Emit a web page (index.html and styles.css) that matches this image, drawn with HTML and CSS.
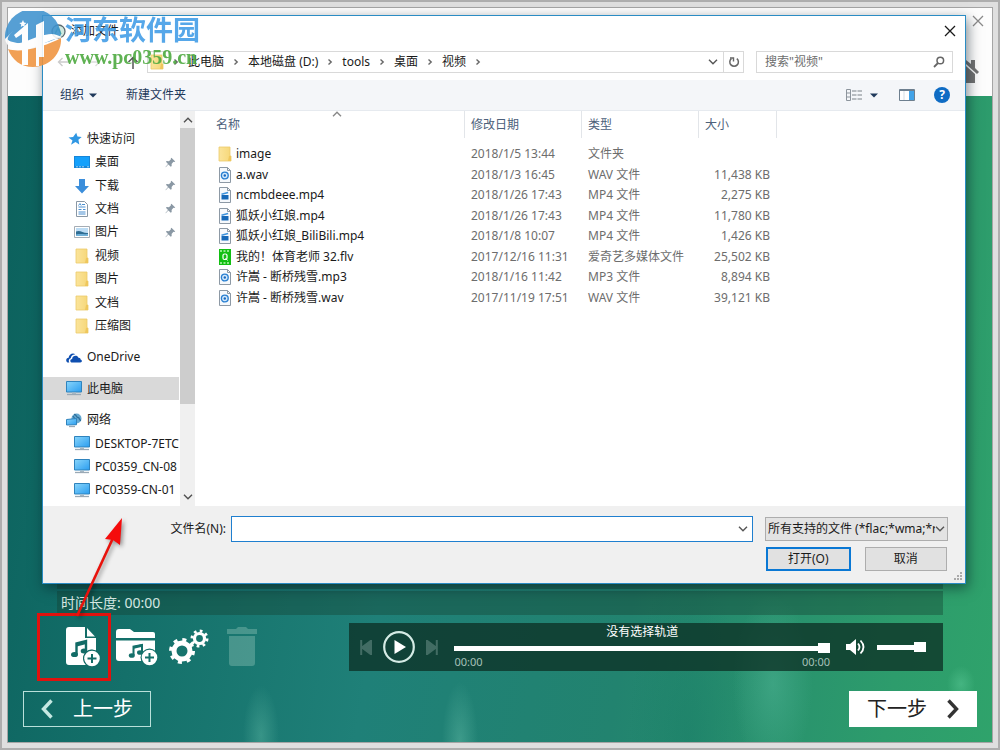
FILE: index.html
```html
<!DOCTYPE html>
<html lang="zh-CN">
<head>
<meta charset="utf-8">
<title>添加文件</title>
<link rel="stylesheet" href="styles.css">
</head>
<body>
<svg class="sprite" aria-hidden="true">
  <defs>
    <linearGradient id="screen" x1="0" y1="0" x2="1" y2="1"><stop offset="0" stop-color="#8ad6fb"/><stop offset="1" stop-color="#2a9df0"/></linearGradient>
    <linearGradient id="paper" x1="0" y1="0" x2="1" y2="0"><stop offset="0" stop-color="#fbe49b"/><stop offset="1" stop-color="#f6d778"/></linearGradient>
  </defs>
  <symbol id="i-chev" viewBox="0 0 6 8"><path d="M1.5 1.5 4.2 4 1.5 6.5" fill="none" stroke="#666" stroke-width="1.4"/></symbol>
  <symbol id="i-down" viewBox="0 0 10 6"><path d="M1 .8 5 4.8 9 .8" fill="none" stroke="currentColor" stroke-width="1.4"/></symbol>
  <symbol id="i-caret" viewBox="0 0 8 5"><path d="M0 .5h8L4 4.5z" fill="#1e395b"/></symbol>
  <symbol id="i-folder" viewBox="0 0 14 16"><path d="M1 1h11v9h1v5H1z" fill="url(#paper)" stroke="#ecca6a" stroke-width=".8"/><path d="M11 10h2v5h-3z" fill="#efc75c"/></symbol>
  <symbol id="i-star" viewBox="0 0 14 14"><path d="m8.200.800 1.300 3.800 4.200.5-3.300 2.700.9 4.600-3.800-2.300-4.500 2.600 1.500-4.300L.5 5.400l4.600-.5z" fill="#2f97e3"/></symbol>
  <symbol id="i-desk" viewBox="0 0 16 12"><path d="M0 0h16v12H0z" fill="#1686d9"/><path d="M1 1h14v9H1z" fill="#14a0fb"/><path d="M2 10.800h9M13 10.800h2" stroke="#bfe3fb" stroke-width=".8" stroke-dasharray="2 1"/></symbol>
  <symbol id="i-dl" viewBox="0 0 16 16"><path d="M5 1h6v7h4l-7 7.500L1 8h4z" fill="#3b8edb"/></symbol>
  <symbol id="i-doc" viewBox="0 0 12 16"><path d="M.5.5h8l3 3v12H.5z" fill="#fff" stroke="#8a98a5"/><path d="M2.500 6h7M2.500 8.500h3M7 8.500h2.500M2.500 11h7M2.500 13h7M6 3.500h3" stroke="#4a8fd0" stroke-width="1"/><path d="M2.500 4.500 4 2.500l1.200 2" fill="none" stroke="#4a8fd0"/></symbol>
  <symbol id="i-pic" viewBox="0 0 16 12"><path d="M.5.5h15v11H.5z" fill="#fff" stroke="#a5adb5"/><path d="M2 2h12v8H2z" fill="#bcdcf4"/><path d="M2 5.500c4-2 7 2 12 1.500v3H2z" fill="#2f6d93"/><path d="M2 8.500c4-1 8 0 12-.5v2H2z" fill="#6fb0d8"/></symbol>
  <symbol id="i-pin" viewBox="0 0 12 12"><path d="m7 .8 4.200 4-1.200.7-.8-.2-2 2.200.1 2.300-1 .8L3.700 8.200.8 11.300l-.3-.3L3.300 7.700 1 5.200l.9-.8 2.400.1 2.200-2-.2-.9z" fill="#8a98a4"/></symbol>
  <symbol id="i-cloud" viewBox="0 0 16 11"><path d="M1.500 10.500C-.8 9 .2 5.800 2.600 5.800 3 2.500 6.400.3 9.300 2.200c-3 .2-4.300 2-4.500 4-2 .5-2.500 2.500-1.500 4.300z" fill="#0f4fb0"/><path d="M5.500 10.500c-2-1-1.300-3.600.6-3.600.3-3.400 5-4.400 6.300-1.200 2-.2 2.300 1.600 2.100 1.800 2 .5 1.800 3-.2 3z" fill="#0f4fb0"/></symbol>
  <symbol id="i-pc" viewBox="0 0 16 15"><path d="M.5.500h15v10.500H.5z" fill="url(#screen)" stroke="#2f83bd"/><path d="M6 11.500h4v1.500H6z" fill="#a9bac6"/><path d="M1 13.500h14" stroke="#9aa9b5" stroke-width="1.300"/></symbol>
  <symbol id="i-net" viewBox="0 0 16 15"><circle cx="10.500" cy="5.500" r="5" fill="#66a8d0"/><path d="M8 1.500c3 0 2 3 4 3s1 3 3 3M7 3l2 3" stroke="#2d6f9c" fill="none" stroke-width="1.300"/><path d="m.5 6.500 10-1v6.200l-10 .3z" fill="url(#screen)" stroke="#2f83bd"/><path d="M3 13.500h6" stroke="#9aa9b5" stroke-width="1.300"/></symbol>
  <symbol id="i-audio" viewBox="0 0 12 16"><path d="M.5.500h8l3 3v12H.5z" fill="#f6f9fc" stroke="#8d99a5"/><path d="M8.500.500v3h3" fill="none" stroke="#8d99a5"/><circle cx="5.800" cy="8.500" r="3.400" fill="#d3e8fa" stroke="#2a80d2" stroke-width="1.400"/><circle cx="5.800" cy="8.500" r="1.200" fill="#1668c0"/></symbol>
  <symbol id="i-video" viewBox="0 0 12 16"><path d="M.5.500h8l3 3v12H.5z" fill="#f6f9fc" stroke="#8d99a5"/><path d="M8.500.500v3h3" fill="none" stroke="#8d99a5"/><path d="M2.500 8h7v4.500h-7z" fill="#1568b8"/><path d="m2.500 7.200 6.600-1.700" stroke="#3c92dc" stroke-width="1.600"/></symbol>
  <symbol id="i-flv" viewBox="0 0 12 16"><path d="M0 0h12v16H0z" fill="#12bf12"/><path d="M1 2h10M1 14h10" stroke="#b6f7b0" stroke-width="1.500" stroke-dasharray="2 1.500"/><rect x="4" y="5" width="4" height="5.500" rx="1.500" fill="none" stroke="#fff" stroke-width="1.200"/><path d="m6.500 9 2 2.500" stroke="#fff"/></symbol>
  <symbol id="i-x" viewBox="0 0 12 12"><path d="m1 1 10 10M11 1 1 11" stroke="currentColor" stroke-width="1.300"/></symbol>
</svg>

<div class="frame">
  <main class="app">
    <header class="app-head">
      <button class="bare app-close" aria-label="关闭程序"><svg width="12" height="12"><use href="#i-x"/></svg></button>
      <button class="bare app-home" aria-label="主页"><svg width="26" height="24" viewBox="0 0 26 24"><path d="M13 1 0 13l2 2L13 5l11 10 2-2-4-4V1h-4v4z" fill="#747474"/><path d="M4 15 13 7l9 8v9H4z" fill="#747474"/></svg></button>
    </header>
    <section class="stage">
      <div class="tracks"></div>
      <div class="length">时间长度: 00:00</div>
      <div class="controls">
        <div class="tools">
          <button class="bare" aria-label="添加文件"><svg width="34" height="40" viewBox="0 0 34 40"><path d="M3 0h16v11h11v13a8 8 0 0 0-9 14H3a3 3 0 0 1-3-3V3a3 3 0 0 1 3-3z" fill="#fff"/><path d="m21 1 8 8.500h-8z" fill="#fff"/><path d="M10.500 27V16.500L20 14v9" fill="none" stroke="#126b66" stroke-width="2.400"/><path d="M10.500 18 20 15.500" stroke="#126b66" stroke-width="3"/><ellipse cx="8.500" cy="27.500" rx="3.500" ry="2.600" fill="#126b66"/><ellipse cx="18" cy="24" rx="3.300" ry="2.500" fill="#126b66"/><circle cx="26" cy="31.500" r="9" fill="#126b66"/><circle cx="26" cy="31.500" r="7.800" fill="#fff"/><path d="M26 27v9M21.500 31.500h9" stroke="#126b66" stroke-width="2"/></svg></button>
          <button class="bare" aria-label="添加文件夹"><svg width="42" height="38" viewBox="0 0 42 38"><path d="M0 10V4a3 3 0 0 1 3-3h11l4 3h19a2 2 0 0 1 2 2v4z" fill="#fff"/><path d="M0 12.500h39V33H3a3 3 0 0 1-3-3z" fill="#fff"/><path d="M17.500 27v-8.500L26 17v7" fill="none" stroke="#14706a" stroke-width="2"/><path d="m17.500 19.500 8.500-2" stroke="#14706a" stroke-width="2.500"/><ellipse cx="15.800" cy="27.500" rx="3" ry="2.300" fill="#14706a"/><ellipse cx="24" cy="24.500" rx="3" ry="2.300" fill="#14706a"/><circle cx="33.500" cy="29.500" r="9" fill="#14706a"/><circle cx="33.500" cy="29.500" r="7.800" fill="#fff"/><path d="M33.500 25v9M29 29.500h9" stroke="#14706a" stroke-width="2"/></svg></button>
          <button class="bare" aria-label="设置"><svg width="40" height="36" viewBox="0 0 40 36"><circle cx="13" cy="22" r="8" fill="none" stroke="#fff" stroke-width="5"/><circle cx="13" cy="22" r="11.400" fill="none" stroke="#fff" stroke-width="3.200" stroke-dasharray="4 4.950"/><circle cx="30.500" cy="9.500" r="5" fill="none" stroke="#fff" stroke-width="3.200"/><circle cx="30.500" cy="9.500" r="7.600" fill="none" stroke="#fff" stroke-width="2.800" stroke-dasharray="2.700 3.270"/></svg></button>
          <button class="bare dim" aria-label="删除"><svg width="32" height="40" viewBox="0 0 32 40"><path d="M1 2h9l2-2h8l2 2h9v5H1zM3 9h26v27a3 3 0 0 1-3 3H6a3 3 0 0 1-3-3z" fill="#8fc4b8"/></svg></button>
        </div>
        <div class="player">
          <button class="bare faded" aria-label="上一首"><svg width="12" height="15" viewBox="0 0 12 15"><path d="M1.200 0v15M12 0v15L2 7.500z" stroke="#b5cfc9" stroke-width="2" fill="#b5cfc9"/></svg></button>
          <button class="bare" aria-label="播放"><svg width="32" height="32" viewBox="0 0 32 32"><circle cx="16" cy="16" r="14.800" fill="none" stroke="#d5ebe5" stroke-width="2.200"/><path d="m11.500 9 11.500 7-11.500 7z" fill="#fff"/></svg></button>
          <button class="bare faded" aria-label="下一首"><svg width="12" height="15" viewBox="0 0 12 15"><path d="M10.800 0v15M0 0v15l10-7.500z" stroke="#b5cfc9" stroke-width="2" fill="#b5cfc9"/></svg></button>
          <div class="progress">
            <label for="seek">没有选择轨道</label>
            <input class="slider" id="seek" type="range" value="100">
            <div class="times"><span>00:00</span><span>00:00</span></div>
          </div>
          <svg class="speaker" width="20" height="16" viewBox="0 0 20 16"><path d="M0 5h4l6-5v16l-6-5H0z" fill="#fff"/><path d="M12 4.500q3 3.500 0 7M14.500 1.500q6 6.500 0 13" fill="none" stroke="#fff" stroke-width="1.800"/></svg>
          <input class="slider volume" type="range" value="100" aria-label="音量">
        </div>
      </div>
      <nav class="steps">
        <button class="step"><svg width="12" height="20" viewBox="0 0 12 20"><path d="m10.500 1.500-8 8.500 8 8.500" fill="none" stroke="#c5e8e2" stroke-width="3.400"/></svg>上一步</button>
        <button class="step next">下一步<svg width="12" height="20" viewBox="0 0 12 20"><path d="m1.500 1.500 8 8.500-8 8.500" fill="none" stroke="#333" stroke-width="3.400"/></svg></button>
      </nav>
    </section>
  </main>
</div>

<section class="dialog" role="dialog" aria-label="添加文件">
  <header class="title">
    <svg width="15" height="15" viewBox="0 0 15 15"><circle cx="7.500" cy="7.500" r="6.500" fill="#cfe8df" stroke="#5c6a70" stroke-width="1.300"/><path d="m4 10 3-6 3 6" fill="none" stroke="#52b788" stroke-width="1.500"/></svg>
    <h1>添加文件</h1>
    <button class="bare" aria-label="关闭"><svg width="12" height="12"><use href="#i-x"/></svg></button>
  </header>
  <div class="nav">
    <div class="arrows">
      <svg width="12" height="10" viewBox="0 0 12 10"><path d="M12 5H2M5.500 1l-4 4 4 4" fill="none" stroke="#ccc" stroke-width="1.400"/></svg>
      <svg width="12" height="10" viewBox="0 0 12 10"><path d="M0 5h10M6.500 1l4 4-4 4" fill="none" stroke="#ddd" stroke-width="1.400"/></svg>
      <svg class="up" width="12" height="13" viewBox="0 0 12 13"><path d="M6 13V2M1.500 6 6 1.500 10.500 6" fill="none" stroke="#555" stroke-width="1.500"/></svg>
    </div>
    <div class="address">
      <svg width="14" height="16"><use href="#i-folder"/></svg>
      <svg width="6" height="8"><use href="#i-chev"/></svg><span>此电脑</span>
      <svg width="6" height="8"><use href="#i-chev"/></svg><span>本地磁盘 (D:)</span>
      <svg width="6" height="8"><use href="#i-chev"/></svg><span>tools</span>
      <svg width="6" height="8"><use href="#i-chev"/></svg><span>桌面</span>
      <svg width="6" height="8"><use href="#i-chev"/></svg><span>视频</span>
      <svg width="6" height="8"><use href="#i-chev"/></svg>
      <svg class="drop" width="10" height="6"><use href="#i-down"/></svg>
      <button class="bare refresh" aria-label="刷新"><svg width="12" height="12" viewBox="0 0 12 12"><path d="M8.800 2.600A4.300 4.300 0 1 1 3.400 2.600" fill="none" stroke="#666" stroke-width="1.500"/><path d="M2 2h3.500v3.500" fill="none" stroke="#666" stroke-width="1.400"/></svg></button>
    </div>
    <div class="search">
      <input type="text" placeholder="搜索&quot;视频&quot;" aria-label="搜索">
      <svg width="12" height="12" viewBox="0 0 12 12"><circle cx="7.300" cy="4.500" r="3.300" fill="none" stroke="#666" stroke-width="1.500"/><path d="M5 7 1 11" stroke="#666" stroke-width="1.800"/></svg>
    </div>
  </div>
  <div class="bar">
    <button class="bare">组织<svg width="8" height="5"><use href="#i-caret"/></svg></button>
    <button class="bare">新建文件夹</button>
    <button class="bare view" aria-label="视图"><svg width="16" height="12" viewBox="0 0 16 12"><path d="M.5.500h4v11h-4zM.5 4h4M.5 8h4" fill="none" stroke="#8d959d"/><path d="M6 2h10M6 6h10M6 10h10" stroke="#7b8288" stroke-dasharray="4.500 1"/></svg><svg width="8" height="5"><use href="#i-caret"/></svg></button>
    <button class="bare" aria-label="预览窗格"><svg width="16" height="12" viewBox="0 0 16 12"><path d="M.5.500h15v11H.5z" fill="#fff" stroke="#6d7f8f"/><path d="M10 1h5v10h-5z" fill="#42a3e8"/><path d="M5 1v10" stroke="#d5dde4"/><path d="M1 1.500h14" stroke="#6d7f8f"/></svg></button>
    <button class="help" aria-label="帮助">?</button>
  </div>
  <div class="browse">
    <ul class="tree">
      <li><svg width="14" height="14"><use href="#i-star"/></svg>快速访问</li>
      <li class="sub"><svg width="16" height="12"><use href="#i-desk"/></svg>桌面<svg class="pin" width="11" height="11"><use href="#i-pin"/></svg></li>
      <li class="sub"><svg width="16" height="16"><use href="#i-dl"/></svg>下载<svg class="pin" width="11" height="11"><use href="#i-pin"/></svg></li>
      <li class="sub"><svg width="16" height="16"><use href="#i-doc"/></svg>文档<svg class="pin" width="11" height="11"><use href="#i-pin"/></svg></li>
      <li class="sub"><svg width="16" height="12"><use href="#i-pic"/></svg>图片<svg class="pin" width="11" height="11"><use href="#i-pin"/></svg></li>
      <li class="sub"><svg width="16" height="16"><use href="#i-folder"/></svg>视频</li>
      <li class="sub"><svg width="16" height="16"><use href="#i-folder"/></svg>图片</li>
      <li class="sub"><svg width="16" height="16"><use href="#i-folder"/></svg>文档</li>
      <li class="sub"><svg width="16" height="16"><use href="#i-folder"/></svg>压缩图</li>
      <li class="group"><svg width="16" height="11"><use href="#i-cloud"/></svg>OneDrive</li>
      <li class="group current"><svg width="16" height="15"><use href="#i-pc"/></svg>此电脑</li>
      <li class="group"><svg width="16" height="15"><use href="#i-net"/></svg>网络</li>
      <li class="sub"><svg width="16" height="15"><use href="#i-pc"/></svg>DESKTOP-7ETC</li>
      <li class="sub"><svg width="16" height="15"><use href="#i-pc"/></svg>PC0359_CN-08</li>
      <li class="sub"><svg width="16" height="15"><use href="#i-pc"/></svg>PC0359-CN-01</li>
    </ul>
    <div class="scroll">
      <svg class="flip" width="10" height="6"><use href="#i-down"/></svg>
      <div class="thumb"></div>
      <svg width="10" height="6"><use href="#i-down"/></svg>
    </div>
    <div class="list">
      <table>
        <colgroup><col class="c-name"><col class="c-date"><col class="c-type"><col class="c-size"><col></colgroup>
        <thead>
          <tr><th><div>名称<svg class="sort flip" width="10" height="6"><use href="#i-down"/></svg></div></th><th><div>修改日期</div></th><th><div>类型</div></th><th><div>大小</div></th><th></th></tr>
        </thead>
        <tbody>
          <tr><td><svg width="14" height="16"><use href="#i-folder"/></svg>image</td><td>2018/1/5 13:44</td><td>文件夹</td><td></td><td></td></tr>
          <tr><td><svg width="14" height="16"><use href="#i-audio"/></svg>a.wav</td><td>2018/1/3 16:45</td><td>WAV 文件</td><td>11,438 KB</td><td></td></tr>
          <tr><td><svg width="14" height="16"><use href="#i-video"/></svg>ncmbdeee.mp4</td><td>2018/1/26 17:43</td><td>MP4 文件</td><td>2,275 KB</td><td></td></tr>
          <tr><td><svg width="14" height="16"><use href="#i-video"/></svg>狐妖小红娘.mp4</td><td>2018/1/26 17:43</td><td>MP4 文件</td><td>11,780 KB</td><td></td></tr>
          <tr><td><svg width="14" height="16"><use href="#i-video"/></svg>狐妖小红娘_BiliBili.mp4</td><td>2018/1/8 10:07</td><td>MP4 文件</td><td>1,426 KB</td><td></td></tr>
          <tr><td><svg width="14" height="16"><use href="#i-flv"/></svg>我的！体育老师 32.flv</td><td>2017/12/16 11:31</td><td>爱奇艺多媒体文件</td><td>25,502 KB</td><td></td></tr>
          <tr><td><svg width="14" height="16"><use href="#i-audio"/></svg>许嵩 - 断桥残雪.mp3</td><td>2018/1/16 11:42</td><td>MP3 文件</td><td>8,894 KB</td><td></td></tr>
          <tr><td><svg width="14" height="16"><use href="#i-audio"/></svg>许嵩 - 断桥残雪.wav</td><td>2017/11/19 17:51</td><td>WAV 文件</td><td>39,121 KB</td><td></td></tr>
        </tbody>
      </table>
    </div>
  </div>
  <footer class="foot">
    <label for="fname">文件名(N):</label>
    <div class="combo"><input id="fname" type="text"><svg width="10" height="6"><use href="#i-down"/></svg></div>
    <div class="filter">
      <select aria-label="文件类型"><option>所有支持的文件 (*flac;*wma;*r</option></select>
      <svg width="10" height="6"><use href="#i-down"/></svg>
    </div>
    <div class="actions"><button class="push primary">打开(O)</button><button class="push">取消</button></div>
  </footer>
  <svg class="grip" width="9" height="9" viewBox="0 0 9 9"><path d="M6 1h2M3 4h2M6 4h2M0 7h2M3 7h2M6 7h2" stroke="#aaa" stroke-width="2"/></svg>
</section>

<div class="brand">
  <svg width="58" height="56" viewBox="0 0 58 56">
    <path d="M0 28a28 28 0 0 1 56-4C50 32 20 38 0 28z" fill="#3f93cf"/>
    <path d="M3 38c14 5 40-4 53-11 1 15-11 29-28 29C16 56 7 49 3 38z" fill="#f0943e"/>
    <path d="M8 20 0 28c2 11 14 12 26 9 14-4 22-10 31-10-7-6-14-4-22-2-12 4-26 12-32 4-1-3 2-6 5-9z" fill="#fff"/>
    <path d="m9 24 14-12v42h-6V23l-6 4zM31 14l8-4v36h-5v9h-3z" fill="#fff"/>
    <path d="m18 9 1 2.500 2.500.5-2 1.500.3 2.500-2-1.300-2 1.300.5-2.500-2-1.500 2.500-.5z" fill="#fff"/>
  </svg>
  <div><strong>河东软件园</strong><span>www.pc0359.cn</span></div>
</div>

<div class="mark"></div>
<svg class="pointer" width="56" height="104" viewBox="0 0 56 104"><path d="M4 100 40 22" stroke="#e8120c" stroke-width="2.600"/><path d="m49 2-2 27-7-5-8-1z" fill="#f50c0c"/></svg>
</body>
</html>
```

FILE: styles.css
```css
* { box-sizing: border-box; }
body {
  margin: 0;
  height: 100vh;
  overflow: hidden;
  font: 12px/16px "Noto Sans", "Noto Sans CJK SC", sans-serif;
  color: #1a1a1a;
}
button, input, select { font: inherit; color: inherit; }
svg { flex: none; display: block; }
.sprite { position: absolute; width: 0; height: 0; }
.bare { border: 0; padding: 0; background: none; display: flex; align-items: center; }
.flip { transform: scaleY(-1); }

/* Application window */
.frame {
  height: 100%;
  padding: 5px;
  background: #dfdfdf;
  border: 2px solid #aeaeae;
}
.app {
  height: 100%;
  display: flex;
  flex-direction: column;
  border: 1px solid #a5a5a5;
}
.app-head {
  height: 88px;
  flex: none;
  background: #fdfdfd;
  display: flex;
  flex-direction: column;
  align-items: flex-end;
  justify-content: space-between;
  padding: 7px 8px 13px;
}
.app-close { color: #8a8a8a; }
.app-home { margin-right: 5px; }
.stage {
  flex: 1;
  display: flex;
  flex-direction: column;
  padding: 0 15px 15px;
  color: #fff;
  background:
    radial-gradient(ellipse 18px 60px at 452px 100%, rgba(90, 180, 160, .5), transparent),
    radial-gradient(ellipse 40px 90px at 765px 91%, rgba(90, 190, 160, .4), transparent),
    radial-gradient(ellipse 14px 18px at 953px 91%, rgba(90, 200, 150, .5), transparent),
    radial-gradient(ellipse 18px 50px at 253px 99%, rgba(90, 180, 160, .45), transparent),
    radial-gradient(ellipse 60px 180px at 680px 100%, rgba(20, 120, 100, .35), transparent),
    linear-gradient(100deg, #0b605c 0%, #14706a 20%, #1f8078 42%, #22836f 65%, #2d9c6c 90%, #2fa36b 100%);
}
.tracks { flex: 1; margin: 0 34px 2px; background: rgba(20, 65, 50, .4); }
.length {
  margin: 0 34px 8px;
  padding: 0 4px;
  background: rgba(20, 65, 50, .4);
  font-size: 14px;
  line-height: 24px;
  color: #d6e8e3;
}
.controls { display: flex; height: 48px; margin: 0 34px 20px; }
.tools { flex: 1; display: flex; align-items: center; gap: 11px; padding-left: 9px; }
.tools .bare:first-child { margin-right: 5px; }
.dim { opacity: .4; margin-left: 6px; }
.player {
  flex: 0 0 67%;
  display: flex;
  align-items: center;
  gap: 11px;
  padding: 0 17px 0 11px;
  background: rgba(12, 45, 35, .75);
}
.faded { opacity: .3; }
.progress { flex: 1; margin: 0 5px; text-align: center; }
.progress label { display: block; }
.times {
  display: flex;
  justify-content: space-between;
  font-size: 11px;
  color: #a5c0b8;
}
.slider {
  appearance: none;
  display: block;
  width: 100%;
  height: 12px;
  margin: 2px 0 0;
  background: linear-gradient(#fff, #fff) center / 100% 5px no-repeat;
}
.slider::-webkit-slider-thumb { appearance: none; width: 12px; height: 10px; background: #fff; }
.volume { width: 49px; margin: 0; }
.steps { display: flex; justify-content: space-between; }
.step {
  height: 36px;
  width: 128px;
  display: flex;
  align-items: center;
  justify-content: center;
  gap: 20px;
  padding: 0;
  border: 1px solid #b9e0da;
  background: none;
  color: #fff;
  font-size: 20px;
}
.next { background: #fff; border-color: #fff; color: #222; }

/* File dialog */
.dialog {
  position: absolute;
  inset: 15px 34px 166px 42px;
  display: flex;
  flex-direction: column;
  border: 1px solid #2a8cc4;
  background: #fff;
  box-shadow: 2px 4px 12px rgba(0, 20, 30, .5);
}
.title { display: flex; align-items: center; gap: 5px; height: 30px; padding: 0 9px 0 8px; }
.title h1 { flex: 1; margin: 0; font: inherit; }
.nav { display: flex; padding: 5px 12px 7px 0; }
.arrows { width: 104px; display: flex; align-items: center; gap: 20px; padding-left: 14px; }
.up { margin-left: 6px; }
.address, .search { display: flex; align-items: center; height: 22px; border: 1px solid #d9d9d9; }
.address { flex: 1; gap: 9px; padding-left: 2px; }
.drop { margin-left: auto; color: #555; }
.refresh { align-self: stretch; width: 20px; margin-left: -4px; justify-content: center; border-left: 1px solid #d9d9d9; }
.search { width: 197px; margin-left: 12px; padding: 0 7px 0 8px; }
.search input { flex: 1; min-width: 0; border: 0; padding: 0; outline: 0; background: none; }
.search input::placeholder { color: #6d6d6d; opacity: 1; }
.bar {
  display: flex;
  align-items: center;
  height: 31px;
  padding: 0 15px 0 17px;
  background: #f4f6f9;
  border-bottom: 1px solid #e6eaef;
  color: #1e395b;
}
.bar .bare:first-child { gap: 5px; margin-right: 29px; }
.bar .view { margin-left: auto; margin-right: 21px; gap: 8px; }
.help {
  width: 16px;
  height: 16px;
  margin-left: 19px;
  padding: 0;
  border: 0;
  border-radius: 50%;
  background: #0f6cc4;
  color: #fff;
  font-weight: 700;
  line-height: 16px;
}
.browse { flex: 1; min-height: 0; display: flex; }
.tree {
  width: 137px;
  margin: 0;
  padding: 16px 1px 4px 0;
  list-style: none;
  display: flex;
  flex-direction: column;
}
.tree li {
  flex: 1;
  display: flex;
  align-items: center;
  gap: 5px;
  padding-left: 23px;
  white-space: nowrap;
  overflow: hidden;
}
.tree .sub { padding-left: 31px; }
.tree .group { margin-top: 8px; }
.tree .current { background: #d9d9d9; }
.tree li:first-child { padding-left: 25px; }
.tree .pin { margin-left: auto; margin-right: 3px; }
.scroll {
  width: 15px;
  display: flex;
  flex-direction: column;
  align-items: center;
  padding: 6px 0;
  background: #f0f0f0;
  color: #505050;
}
.thumb { flex: none; width: 15px; height: 72%; margin: 5px 0 auto; background: #cdcdcd; }
.list { flex: 1; min-width: 0; }
table { width: 100%; table-layout: fixed; border-collapse: collapse; color: #6d6d6d; }
.c-name { width: 270px; }
.c-date, .c-type { width: 117px; }
.c-size { width: 78px; }
th { padding: 0 0 6px; font-weight: 400; text-align: left; color: #4c607a; }
th div { position: relative; height: 27px; padding-left: 6px; line-height: 27px; border-right: 1px solid #e2e5e9; }
th:first-child div { padding-left: 21px; }
.sort { position: absolute; left: 137px; top: 0; color: #888; }
td { height: 20px; padding: 0 7px 0 6px; line-height: 16px; white-space: nowrap; }
tr:nth-child(even) td { height: 21px; }
td:first-child { display: flex; align-items: center; gap: 4px; padding-left: 23px; color: #1a1a1a; }
td:nth-child(4) { text-align: right; }
.foot {
  display: grid;
  grid-template-columns: 183px 1fr 183px;
  align-items: center;
  gap: 5px 0;
  padding: 10px 17px 12px 0;
  background: #f0f0f0;
}
.foot label { text-align: right; }
.combo {
  display: flex;
  align-items: center;
  height: 26px;
  margin: 0 12px 0 5px;
  padding-right: 4px;
  border: 1px solid #1f7fcf;
  background: #fff;
  color: #555;
}
.combo input { flex: 1; min-width: 0; border: 0; outline: 0; background: none; }
.filter { display: grid; align-items: center; }
.filter > * { grid-area: 1 / 1; }
.filter select {
  appearance: none;
  width: 100%;
  height: 24px;
  padding: 0 12px 0 2px;
  border: 1px solid #adadad;
  border-radius: 0;
  background: #e3e3e3;
}
.filter svg { justify-self: end; margin-right: 3px; color: #555; pointer-events: none; }
.actions { grid-column: 3; display: flex; gap: 14px; padding: 0 1px; }
.push { flex: 1; height: 24px; padding: 0; border: 1px solid #adadad; background: #e1e1e1; }
.primary { border: 2px solid #0a78d4; }
.grip { position: absolute; right: 2px; bottom: 2px; }

/* Site watermark */
.brand {
  position: absolute;
  left: 5px;
  top: 11px;
  display: flex;
  gap: 2px;
  opacity: .88;
  pointer-events: none;
}
.brand strong, .brand span { display: block; white-space: nowrap; }
.brand strong { font: 700 27px/36px "Noto Sans CJK SC", sans-serif; color: #3f9ce6; }
.brand span { font: 700 20px/20px "Liberation Serif", serif; color: #4aa83c; }

/* Callout */
.mark { position: absolute; left: 37px; top: 613px; width: 74px; height: 68px; border: 3px solid #e0120e; }
.pointer { position: absolute; left: 73px; top: 516px; filter: drop-shadow(2px 2px 2px rgba(0, 0, 0, .4)); }
```
